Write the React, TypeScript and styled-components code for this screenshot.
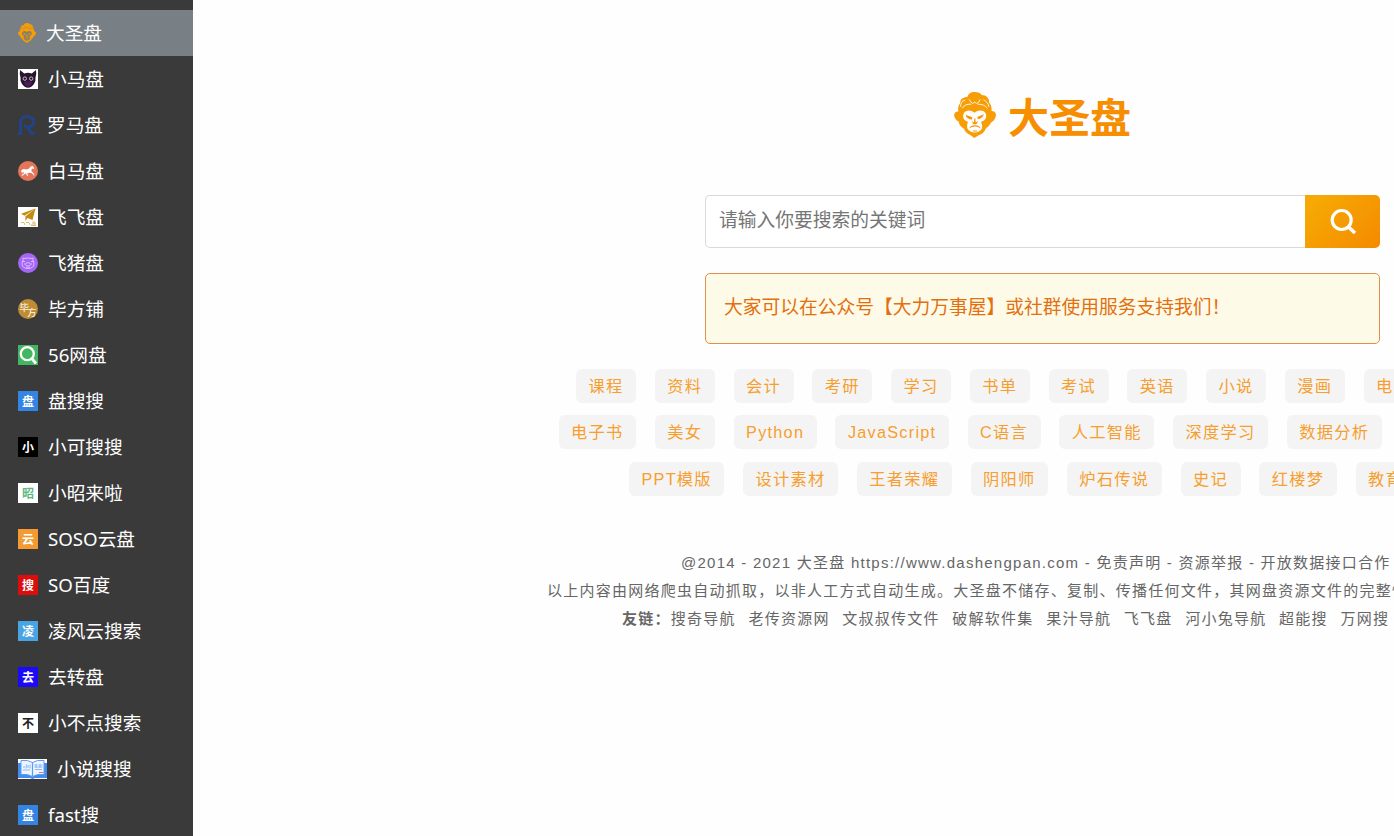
import React from 'react';
import styled, { createGlobalStyle } from 'styled-components';

const GlobalStyle = createGlobalStyle`
  * { box-sizing: border-box; }
  body {
    margin: 0;
    background: #fefefe;
    overflow: hidden;
  }
`;

const Page = styled.div`
  display: flex;
  height: 836px;
  width: 100%;
  overflow: hidden;
  background: #fefefe;
`;

const Sidebar = styled.nav`
  flex: none;
  width: 193px;
  padding-top: 10px;
  background: #3a3a3a;
  overflow: hidden;
  font-family: 'Noto Sans', 'Noto Sans CJK SC', sans-serif;
`;

const NavItem = styled.a<{ $active?: boolean }>`
  display: flex;
  align-items: center;
  gap: 10px;
  height: 46px;
  padding-left: 18px;
  background: ${(p) => (p.$active ? '#788086' : 'transparent')};
  color: #fff;
  font-size: 18.67px;
  line-height: 46px;
  white-space: nowrap;
`;

const NavIcon = styled.svg`
  flex: none;
  display: block;
`;

const GlyphBadge = styled.span<{ $bg: string; $fg?: string }>`
  flex: none;
  width: 20px;
  height: 20px;
  background: ${(p) => p.$bg};
  color: ${(p) => p.$fg || '#fff'};
  font: 700 12px/19px 'Noto Sans CJK SC', sans-serif;
  text-align: center;
`;

const Main = styled.main`
  flex: 1;
  min-width: 0;
  overflow: hidden;
  font-family: 'Liberation Sans', 'Noto Sans CJK SC', sans-serif;
`;

const Stage = styled.div`
  display: flex;
  flex-direction: column;
  align-items: center;
  width: 1699px;
  padding-top: 85px;
`;

const Logo = styled.div`
  display: flex;
  align-items: center;
  gap: 12px;
  height: 60px;
  color: #f68e00;
  font: 700 41px/60px 'Noto Sans CJK SC', sans-serif;
`;

const SearchBar = styled.form`
  display: flex;
  width: 675px;
  height: 53px;
  margin-top: 50px;
`;

const SearchInput = styled.input`
  flex: 1;
  min-width: 0;
  padding: 0 13px 2px;
  border: 1px solid #d9d9d9;
  border-right: 0;
  border-radius: 5px 0 0 5px;
  background: #fff;
  font: 18.75px 'Liberation Sans', 'Noto Sans CJK SC', sans-serif;
  outline: none;
  &::placeholder { color: #757575; }
`;

const SearchButton = styled.button`
  width: 75px;
  padding: 0;
  border: 0;
  border-radius: 0 5px 5px 0;
  background: linear-gradient(135deg, #f6a804 15%, #f48a00);
`;

const Notice = styled.div`
  width: 675px;
  height: 71px;
  margin-top: 25px;
  padding-left: 18px;
  border: 1px solid #e08f4c;
  border-radius: 5px;
  background: #fdfae7;
  color: #e2700f;
  font-size: 18.75px;
  line-height: 67px;
`;

const TagList = styled.div`
  display: flex;
  flex-direction: column;
  gap: 12.4px;
  width: 100%;
  margin-top: 25px;
`;

const TagRow = styled.div<{ $indent: number }>`
  display: flex;
  gap: 18.75px;
  padding-left: ${(p) => p.$indent}px;
`;

const Tag = styled.a`
  flex: none;
  height: 34px;
  padding: 0 12.5px;
  border-radius: 6px;
  background: #f4f4f4;
  color: #f79e2e;
  font-size: 16.25px;
  letter-spacing: 1.25px;
  line-height: 34px;
  white-space: nowrap;
`;

const Footer = styled.footer`
  width: 100%;
  margin-top: 53px;
  color: #666;
  font-size: 15px;
  letter-spacing: 1.25px;
`;

const FooterLine = styled.div<{ $indent: number }>`
  display: flex;
  height: 28px;
  padding-left: ${(p) => p.$indent}px;
  line-height: 28px;
  white-space: nowrap;
`;

const FriendLink = styled.a`
  margin-right: 12.6px;
`;

const Monkey = ({ width, height, face }: { width: number; height: number; face: string }) => (
  <NavIcon width={width} height={height} viewBox="72 38 124 136" preserveAspectRatio="none">
    <path
      fill="#f79d06"
      d="M112 52Q115 38 132 38T154 47Q175 48 176 70Q184 78 183 94Q195 94 196 106Q194 122 183 127Q176 139 166 146Q160 161 145 166L132 174L120 165Q105 158 101 146Q88 140 86 126Q74 120 72 106Q75 95 85 96Q82 80 90 71Q90 54 112 52Z"
    />
    <path fill="none" stroke={face} strokeWidth="2.6" d="M97 86Q103 73 123 74M142 74Q163 74 170 86M117 60Q120 68 127 72Q133 64 139 72Q147 69 149 60M92 82Q90 66 105 62M175 82Q173 67 159 61" />
    <path
      fill={face}
      d="M132 99Q120 89 107 95Q98 101 99 112Q101 123 113 126Q109 137 111 145Q120 158 133 158Q147 158 155 145Q156 135 152 126Q165 122 167 111Q168 99 158 94Q144 90 132 99Z"
    />
    <path
      fill="#f79304"
      d="M106 105L126 113L125 119Q110 119 106 105ZM160 104L141 112L142 118Q156 118 160 104ZM124 124L131 128L132 116L135 116L136 128L144 124L138 133H129ZM117 146Q119 137 133 136Q148 136 151 146Q142 139 133 140Q124 140 117 146ZM128 152H140V155H128Z"
    />
  </NavIcon>
);

const CatIcon = () => (
  <NavIcon width="20" height="20" viewBox="0 0 20 20">
    <path fill="#fff" d="M0 0h20v20H0z" />
    <path fill="#28152d" d="M2 1l4.2 3.4Q10 3 13.8 4.4L18 1q.7 4-.5 7.3.5 4.200-1.500 6.700Q13.500 18.500 10 18.700 6.500 18.500 4 15 2 12.500 2.500 8.300 1.300 5 2 1z" />
    <circle cx="6.800" cy="9.600" r="1.700" fill="#28152d" stroke="#c9c0cd" strokeWidth="1" />
    <circle cx="13.200" cy="9.600" r="1.700" fill="#28152d" stroke="#c9c0cd" strokeWidth="1" />
    <path fill="#511a5b" d="M6 13q4-1.500 8 0-1 4.500-4 4.700Q7 17.500 6 13z" />
  </NavIcon>
);

const RomaIcon = () => (
  <NavIcon width="19" height="20" viewBox="0 0 19 20" fill="none" stroke="#214489" strokeWidth="3">
    <path d="M0 18.500h2.500V8q0-6.500 6.500-6.500 6.500 0 6.500 5.300 0 5.200-5.500 5.200H7" />
    <path d="M9 11.500l4.500 7H17" />
    <path d="M7 12v-2.500" strokeWidth="2" />
  </NavIcon>
);

const HorseIcon = () => (
  <NavIcon width="20" height="20" viewBox="0 0 20 20">
    <circle cx="10" cy="10" r="10" fill="#e57558" />
    <path fill="#fff" d="M3 10q1.500-2.500 4-1.700 2.500.5 4-.8L12.700 5.500l2-.5 1.500 2.200-.6.700-1.600-.4-.8 2.500 2 1.700 1.500 2.700-1-.2-1.700-2-2.400-.5-2.400.6 1 2.700-1.200-.2-1.200-2.500-2 1.500-1.800 1.200-.4-1 2.200-1.500.2-1.500-2 1z" />
  </NavIcon>
);

const PlaneIcon = () => (
  <NavIcon width="20" height="20" viewBox="0 0 20 20">
    <path fill="#fff" d="M0 0h20v20H0z" />
    <path fill="#c58a12" d="M17.500 1.500L3 6.700l3.500 2zM17.500 1.500L7.500 9.300l-.2 4.700 2.200-3 5 2z" />
    <path fill="none" stroke="#dfbd78" strokeWidth="1" d="M3 15.500h3l1 2.500M8 15.500h3l1 2.500M14 15h3v3h-4M13 18.500h5M14.500 16.500h2" />
  </NavIcon>
);

const PigIcon = () => (
  <NavIcon width="20" height="20" viewBox="0 0 20 20">
    <circle cx="10" cy="10" r="10" fill="#a566f8" />
    <g fill="none" stroke="#dcc5ff" strokeWidth=".9">
      <path d="M5 5l2 .5q3-1 6 0l2-.5v3q1 1 1 3-.5 4.500-6 4.500T4 11q0-2 1-3z" />
      <path d="M4 8.500h3M13 8.500h3M6.500 10.500v1M13.500 10.500v1" />
      <ellipse cx="10" cy="11.300" rx="2.500" ry="1.700" />
      <path d="M8 14.200h4" />
    </g>
  </NavIcon>
);

const BifangIcon = () => (
  <NavIcon width="20" height="20" viewBox="0 0 20 20">
    <circle cx="10" cy="10" r="10" fill="#bd8c34" />
    <g fill="#f8ecd4" fontFamily="'Noto Sans CJK SC', sans-serif" fontWeight="500">
      <text x="1.500" y="12" fontSize="9.500">毕</text>
      <text x="9" y="16.800" fontSize="9.500">方</text>
    </g>
  </NavIcon>
);

const FindIcon = () => (
  <NavIcon width="20" height="20" viewBox="0 0 20 20" fill="none" stroke="#fff">
    <path fill="#43b662" stroke="none" d="M0 0h20v20H0z" />
    <circle cx="9.300" cy="8.700" r="6.500" strokeWidth="2.300" />
    <path d="M13.800 13.500l4.200 5" strokeWidth="2.800" />
  </NavIcon>
);

const BookIcon = () => (
  <NavIcon width="29" height="20" viewBox="0 0 29 20">
    <path fill="#fff" d="M0 0h29v20H0z" />
    <path fill="#438cf0" d="M0 4h3v12h8l3.500 1.500L18 16h8V4h3v15H17l-2.500 1-2.500-1H0z" />
    <path fill="#eef5ff" stroke="#5c9cf3" strokeWidth="1" d="M3 1.500q7-1 11.500 2 4.500-3 11.500-2v14q-7-1-11.500 2-4.500-3-11.500-2z" />
    <path stroke="#5c9cf3" strokeWidth="1.200" d="M14.500 3.500v14" />
    <path stroke="#86b7f8" strokeWidth="1" fill="none" d="M5 8h2M8.500 5.500l-.5 4M10 6v3M12 5.500v4M5 11h7M16.500 6h3M20.500 6h4M16.500 8h8M17 10.500h7M18 5v4M22 5v4" />
    <path stroke="#ed705d" strokeWidth="1" d="M21 13.500h4" />
  </NavIcon>
);

const navItems: { label: string; icon: React.ReactNode }[] = [
  { label: '大圣盘', icon: <Monkey width={18} height={20} face="#89806a" /> },
  { label: '小马盘', icon: <CatIcon /> },
  { label: '罗马盘', icon: <RomaIcon /> },
  { label: '白马盘', icon: <HorseIcon /> },
  { label: '飞飞盘', icon: <PlaneIcon /> },
  { label: '飞猪盘', icon: <PigIcon /> },
  { label: '毕方铺', icon: <BifangIcon /> },
  { label: '56网盘', icon: <FindIcon /> },
  { label: '盘搜搜', icon: <GlyphBadge $bg="#3484e4">盘</GlyphBadge> },
  { label: '小可搜搜', icon: <GlyphBadge $bg="#000">小</GlyphBadge> },
  { label: '小昭来啦', icon: <GlyphBadge $bg="#fff" $fg="#5fb985">昭</GlyphBadge> },
  { label: 'SOSO云盘', icon: <GlyphBadge $bg="#f39a32">云</GlyphBadge> },
  { label: 'SO百度', icon: <GlyphBadge $bg="#dc0d0d">搜</GlyphBadge> },
  { label: '凌风云搜索', icon: <GlyphBadge $bg="#48a4e2">凌</GlyphBadge> },
  { label: '去转盘', icon: <GlyphBadge $bg="#1c09fa">去</GlyphBadge> },
  { label: '小不点搜索', icon: <GlyphBadge $bg="#fff" $fg="#222">不</GlyphBadge> },
  { label: '小说搜搜', icon: <BookIcon /> },
  { label: 'fast搜', icon: <GlyphBadge $bg="#3484e4">盘</GlyphBadge> },
];

const tagRows = [
  { indent: 383, tags: ['课程', '资料', '会计', '考研', '学习', '书单', '考试', '英语', '小说', '漫画', '电影'] },
  { indent: 365.6, tags: ['电子书', '美女', 'Python', 'JavaScript', 'C语言', '人工智能', '深度学习', '数据分析'] },
  { indent: 436, tags: ['PPT模版', '设计素材', '王者荣耀', '阴阳师', '炉石传说', '史记', '红楼梦', '教育'] },
];

const friends = ['搜奇导航', '老传资源网', '文叔叔传文件', '破解软件集', '果汁导航', '飞飞盘', '河小兔导航', '超能搜', '万网搜'];

export default function App() {
  return (
    <Page>
      <GlobalStyle />
      <Sidebar>
        {navItems.map((item, i) => (
          <NavItem key={item.label} $active={i === 0}>
            {item.icon}
            {item.label}
          </NavItem>
        ))}
      </Sidebar>
      <Main>
        <Stage>
          <Logo>
            <Monkey width={42} height={46} face="#fefefe" />
            大圣盘
          </Logo>
          <SearchBar>
            <SearchInput placeholder="请输入你要搜索的关键词" />
            <SearchButton type="button" aria-label="搜索">
              <svg width="75" height="53" viewBox="0 0 75 53" fill="none" stroke="#fff" strokeWidth="3.2">
                <circle cx="36.700" cy="25" r="9.500" />
                <path d="M43.500 32l6.500 6" strokeWidth="3.600" />
              </svg>
            </SearchButton>
          </SearchBar>
          <Notice>大家可以在公众号【大力万事屋】或社群使用服务支持我们！</Notice>
          <TagList>
            {tagRows.map((row) => (
              <TagRow key={row.indent} $indent={row.indent}>
                {row.tags.map((t) => (
                  <Tag key={t}>{t}</Tag>
                ))}
              </TagRow>
            ))}
          </TagList>
          <Footer>
            <FooterLine $indent={488}>
              @2014 - 2021 大圣盘 https://www.dashengpan.com - 免责声明 - 资源举报 - 开放数据接口合作
            </FooterLine>
            <FooterLine $indent={354}>
              以上内容由网络爬虫自动抓取，以非人工方式自动生成。大圣盘不储存、复制、传播任何文件，其网盘资源文件的完整性
            </FooterLine>
            <FooterLine $indent={429}>
              <b>友链：</b>
              {friends.map((f) => (
                <FriendLink key={f}>{f}</FriendLink>
              ))}
            </FooterLine>
          </Footer>
        </Stage>
      </Main>
    </Page>
  );
}
